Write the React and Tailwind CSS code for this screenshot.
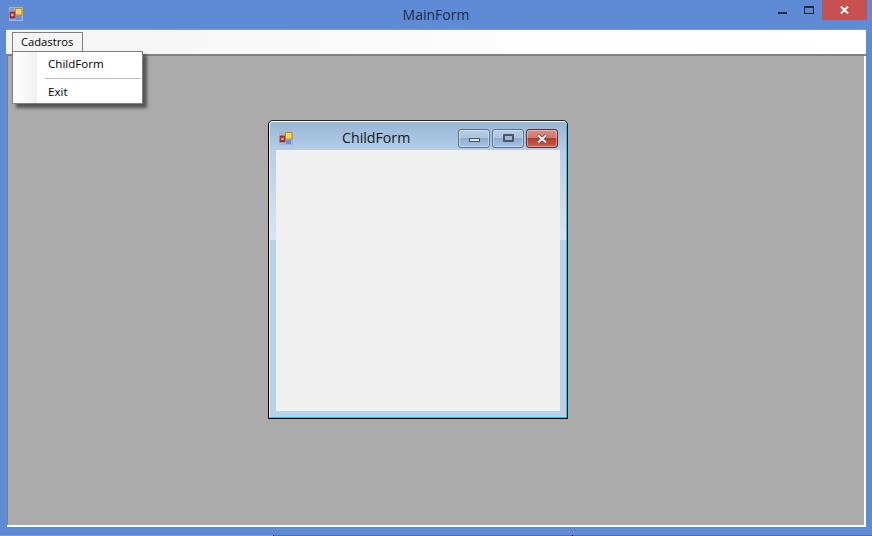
const AppIcon = ({ className }) => (
  <svg className={className} width="14" height="14" viewBox="0 0 14 14" fill="none">
    <rect x="0.5" y="0.5" width="13" height="13" fill="#9fb2d2" fillOpacity="0.45" stroke="#aab3c2" />
    <path d="M5.5 0v14M9.5 0v14M0 4.5h14M0 9.5h14" stroke="#aab3c2" />
    <rect x="1" y="5" width="5" height="6" fill="#c9282d" stroke="#8a1a1a" strokeWidth="0.6" />
    <rect x="2.4" y="6.8" width="2" height="2.2" fill="#f3c9a0" />
    <rect x="6.5" y="1.5" width="6.5" height="6.5" fill="#f8d558" stroke="#b98a28" />
    <rect x="7" y="9" width="5" height="4" fill="#5b94e0" />
  </svg>
);

const ChildButton = ({ close, children }) => (
  <div
    className={
      "w-[32px] h-[19px] rounded-[3px] border flex items-center justify-center shadow-[inset_0_0_0_1px_rgba(255,255,255,0.4)] " +
      (close
        ? "border-[#5e2a33] bg-[linear-gradient(#dc8b80_0%,#d07a6e_45%,#b53a28_50%,#c9604c_100%)]"
        : "border-[#5a7396] bg-[linear-gradient(#b8cde5_0%,#adc4de_45%,#8fadce_50%,#aac3de_100%)]")
    }
  >
    {children}
  </div>
);

const ChildWindow = () => (
  <div className="absolute left-[268px] top-[120px] w-[300px] h-[299px] rounded-t-[5px] border border-black border-t-[#222] bg-white pt-px">
    <div className="h-full flex flex-col border-l border-l-[#e4edf6] border-r border-b border-r-[#22c8f0] border-b-[#22c8f0] rounded-t-[4px] pl-[6px] pr-[6px] pb-[6px] bg-[linear-gradient(#98b6d6_0%,#b6cfe9_10%,#d8e6f3_39.8%,#b9d1ea_40%,#b9d1ea_100%)]">
      <div className="h-[28px] pt-[4px] flex items-center shrink-0">
        <AppIcon className="ml-[3px] shrink-0" />
        <span className="ml-[49px] text-[14.2px] text-[#101820]">ChildForm</span>
        <div className="ml-auto flex gap-[2px] mr-[2px] mt-px">
          <ChildButton>
            <div className="w-[11px] h-[4px] bg-[#dfe3e9] border border-[#44546c] mt-[3px]" />
          </ChildButton>
          <ChildButton>
            <div className="w-[11px] h-[8px] bg-[#9fb6d2] border-2 border-[#48566c] rounded-[1px] -mt-[2px]" />
          </ChildButton>
          <ChildButton close>
            <svg width="14" height="10" viewBox="0 0 14 10">
              <path d="M3 1.5l8 7M11 1.5l-8 7" stroke="#5a4a4a" strokeWidth="3.6" />
              <path d="M3 1.5l8 7M11 1.5l-8 7" stroke="#f2f2f2" strokeWidth="2.2" />
            </svg>
          </ChildButton>
        </div>
      </div>
      <div className="flex-1 bg-[#f0f0f0]" />
    </div>
  </div>
);

const Dropdown = () => (
  <div className="absolute left-[12px] top-[51px] w-[131px] h-[53px] border border-[#808080] bg-white shadow-[4px_4px_3px_rgba(0,0,0,0.5)] flex text-[11.6px] text-black">
    <div className="w-[24px] shrink-0 bg-[linear-gradient(90deg,#ffffff,#f1f1f1)]" />
    <div className="flex-1 flex flex-col">
      <div className="h-[26px] pl-[11px] pb-[2px] flex items-center">ChildForm</div>
      <div className="h-px ml-[8px] mr-px bg-[#bdbdbd]" />
      <div className="flex-1 pl-[11px] pt-[2px] flex items-center">Exit</div>
    </div>
  </div>
);

export default function App() {
  return (
    <div className="relative w-[872px] h-[536px] overflow-hidden bg-[#5f8ad6] flex flex-col font-['Open_Sans',sans-serif]">
      <div className="h-[29px] shrink-0 flex items-center relative">
        <AppIcon className="absolute left-[9px] top-[7px]" />
        <span className="w-full text-center text-[14px] text-[#1f2c44]">MainForm</span>
        <div className="absolute left-[778px] top-[12px] w-[9px] h-[2px] bg-[#1e2a3c]" />
        <div className="absolute left-[804px] top-[6px] w-[10px] h-[8px] border border-t-2 border-[#1e2a3c]" />
        <div className="absolute left-[822px] top-0 w-[45px] h-[20px] bg-[#c75050] flex items-center justify-center">
          <svg width="9" height="8" viewBox="0 0 9 8">
            <path d="M1 0.5l7 7M8 0.5l-7 7" stroke="#fff" strokeWidth="2" />
          </svg>
        </div>
      </div>

      <div className="ml-[6px] w-[860px] h-[498px] shrink-0 flex flex-col">
        <div className="h-[27px] shrink-0 border-t border-t-[#7f9cc8] border-b-2 border-b-[#808080] bg-[linear-gradient(90deg,#f4f4f4,#fdfdfd_60%,#ffffff)] pl-[6px] pt-[2px]">
          <div className="w-[71px] h-[22px] border border-b-0 border-[#808080] bg-[#f5f5f5] text-[11.2px] text-black pl-[8px] leading-[18px]">
            Cadastros
          </div>
        </div>
        <div className="flex-1 flex flex-col border-r-2 border-r-white">
          <div className="flex-1 bg-[#ababab] ml-px border-l border-l-[#808080]" />
          <div className="h-[2px] bg-white ml-px" />
        </div>
      </div>

      <div className="mt-auto h-px flex shrink-0 bg-[#4a6fb0]">
        <div className="w-[273px] bg-[#7a9bd8]" />
        <div className="w-px bg-black" />
        <div className="w-[298px]" />
        <div className="w-px bg-black" />
      </div>

      <Dropdown />
      <ChildWindow />
    </div>
  );
}
